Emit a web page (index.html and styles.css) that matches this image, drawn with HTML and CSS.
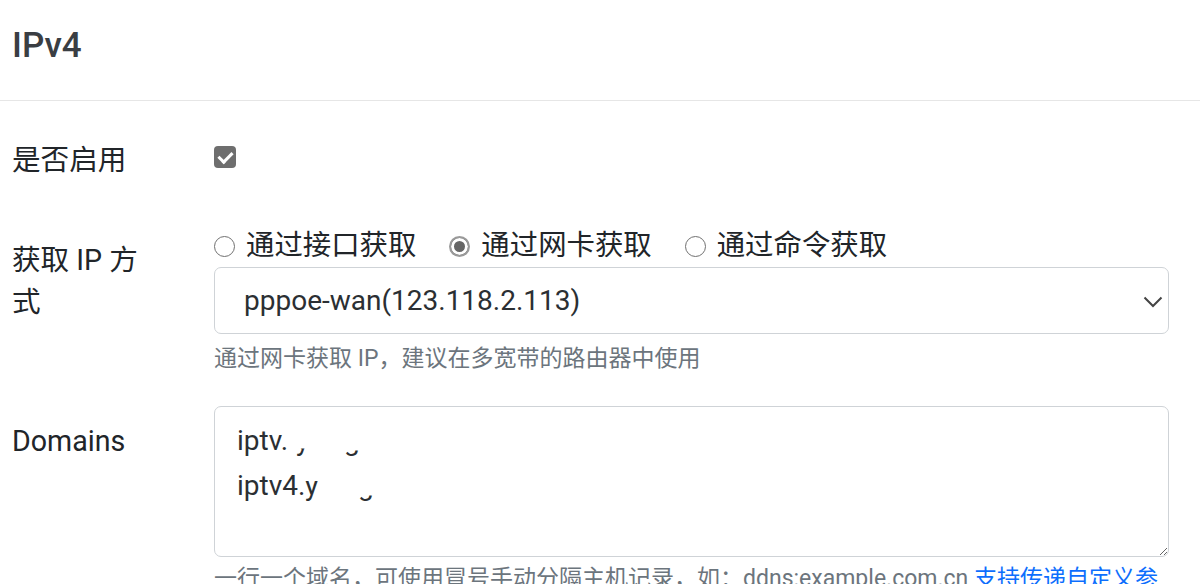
FILE: index.html
```html
<!DOCTYPE html>
<html lang="zh-CN">
<head>
<meta charset="utf-8">
<title>IPv4</title>
<link rel="stylesheet" href="styles.css">
</head>
<body>
<div class="head">
  <h5 class="title">IPv4</h5>
</div>
<div class="form">
  <div class="row row-enable">
    <label class="label" for="enable">是否启用</label>
    <div class="field">
      <input id="enable" type="checkbox" class="check" checked>
    </div>
  </div>
  <div class="row row-method">
    <label class="label">获取 IP 方式</label>
    <div class="field">
      <div class="radios">
        <label class="radio-item"><input type="radio" name="m" class="radio">通过接口获取</label>
        <label class="radio-item"><input type="radio" name="m" class="radio" checked>通过网卡获取</label>
        <label class="radio-item"><input type="radio" name="m" class="radio">通过命令获取</label>
      </div>
      <div class="select-wrap">
        <select class="select"><option>pppoe-wan(123.118.2.113)</option></select>
        <svg class="chev" width="20" height="12" viewBox="0 0 20 12"><path d="M1.5 1.5 L10 10 L18.5 1.5" fill="none" stroke="#444" stroke-width="2"/></svg>
      </div>
      <div class="help">通过网卡获取 IP，建议在多宽带的路由器中使用</div>
    </div>
  </div>
  <div class="row row-domains">
    <label class="label" for="domains">Domains</label>
    <div class="field">
      <div class="ta-wrap">
        <textarea id="domains" class="textarea">iptv.
iptv4.</textarea>
        <span class="tail t1">y</span>
        <span class="tail t2">g</span>
        <span class="tail t3">y</span>
        <span class="tail t4">g</span>
      </div>
      <div class="help">一行一个域名，可使用冒号手动分隔主机记录，如：ddns:example.com.cn <a class="link" href="#">支持传递自定义参数</a></div>
    </div>
  </div>
</div>
</body>
</html>
```
FILE: styles.css
```css
body {
  margin: 0;
  background: #fff;
  color: #212529;
  font-family: Roboto, "Noto Sans CJK SC", sans-serif;
  overflow: hidden;
}

.head {
  padding: 25px 12px 33px;
  border-bottom: 1px solid #e6e6e6;
}

.title {
  margin: 0;
  font-size: 35px;
  font-weight: 500;
  line-height: 42px;
  color: #3a3e43;
}

.form {
  padding: 24px 0 0 12px;
}

.row {
  display: grid;
  grid-template-columns: 202px 955px;
}

.row-enable { margin-bottom: 44px; }
.row-method { margin-bottom: 30px; }

.label {
  font-size: 28.6px;
  line-height: 42px;
  padding-top: 14px;
  max-width: 140px;
}

.check {
  appearance: none;
  -webkit-appearance: none;
  margin: 21px 0 0;
  width: 22px;
  height: 22px;
  border-radius: 4px;
  background: #6e6e6e;
  position: relative;
  display: block;
}

.check::after {
  content: "";
  position: absolute;
  left: 7px;
  top: 3px;
  width: 6px;
  height: 11px;
  border-right: 3px solid #fff;
  border-bottom: 3px solid #fff;
  transform: rotate(45deg);
}

.radios {
  display: flex;
  font-size: 28.4px;
  line-height: 42px;
  height: 42px;
}

.radio-item {
  display: inline-flex;
  align-items: center;
  gap: 11px;
  margin-right: 33px;
}

.radio {
  appearance: none;
  -webkit-appearance: none;
  margin: 0;
  width: 21px;
  height: 21px;
  border-radius: 50%;
  border: 1.5px solid #707070;
  background: #fff;
}

.radio:checked {
  border: 2px solid #9a9a9a;
  background: #666;
  box-shadow: inset 0 0 0 3px #fff;
}

.select-wrap {
  position: relative;
}

.select {
  appearance: none;
  -webkit-appearance: none;
  display: block;
  width: 100%;
  height: 67px;
  margin: 0;
  padding: 0 60px 0 29px;
  border: 1px solid #cfd3d7;
  border-radius: 7px;
  background: #fff;
  font-family: Roboto, "Noto Sans CJK SC", sans-serif;
  font-size: 28px;
  color: #2b2f33;
}

.chev {
  position: absolute;
  right: 6px;
  top: 29px;
}

.help {
  margin-top: 8px;
  font-size: 23px;
  line-height: 34px;
  color: #6c757d;
}

.row-domains .help {
  margin-top: 5px;
}

.ta-wrap {
  position: relative;
}

.textarea {
  display: block;
  width: 100%;
  height: 151px;
  box-sizing: border-box;
  margin: 0;
  padding: 11px 22px;
  border: 1px solid #cfd3d7;
  border-radius: 7px;
  font-family: Roboto, "Noto Sans CJK SC", sans-serif;
  font-size: 28px;
  line-height: 45px;
  color: #2b2f33;
  resize: vertical;
}

.tail {
  position: absolute;
  font-size: 28px;
  line-height: 45px;
  color: #2b2f33;
  clip-path: inset(68% 0 0 0);
}

.t1 { left: 82px; top: 12px; }
.t2 { left: 130px; top: 12px; clip-path: inset(72% 0 0 0); }
.t3 { left: 91px; top: 57px; clip-path: inset(40% 0 0 0); }
.t4 { left: 144px; top: 57px; clip-path: inset(72% 0 0 0); }

.link {
  color: #0d6efd;
  text-decoration: none;
}
```
